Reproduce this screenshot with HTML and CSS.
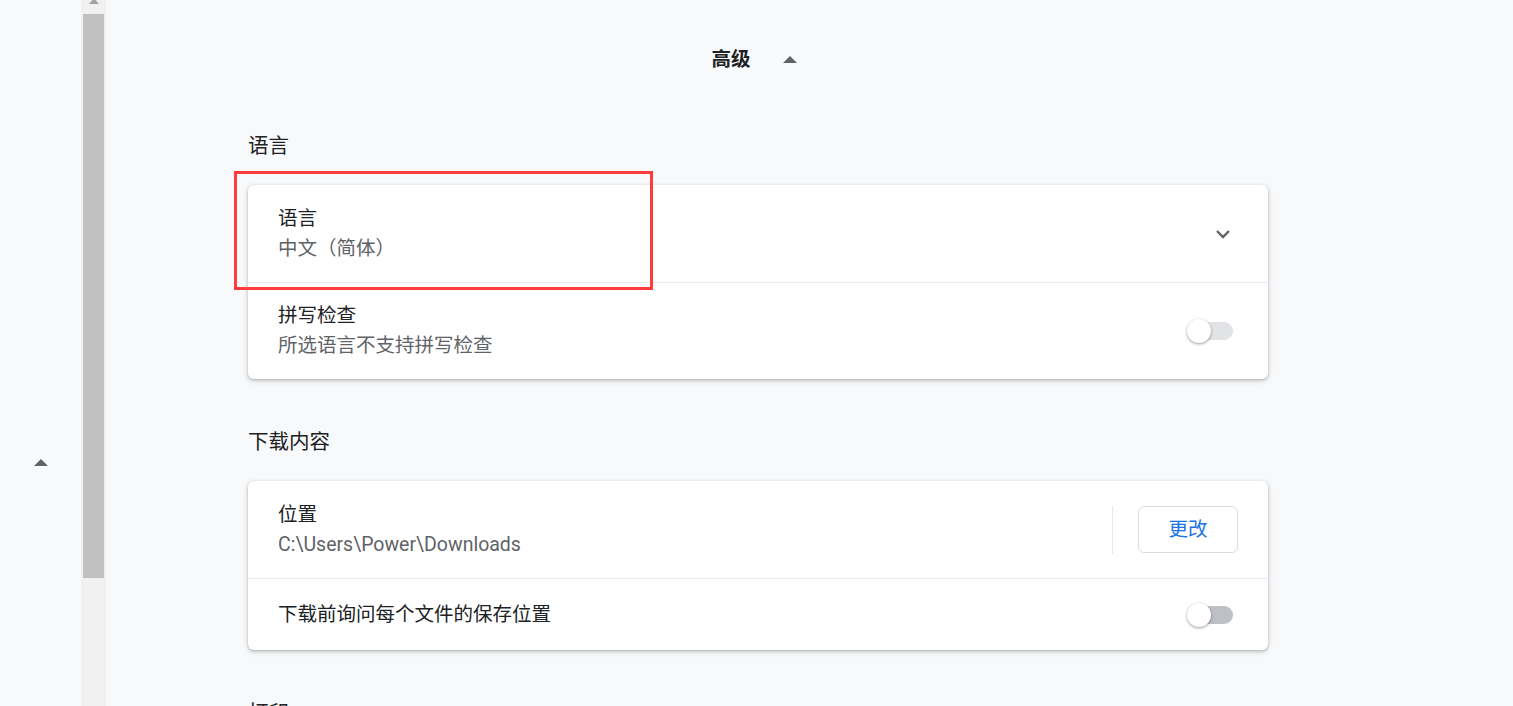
FILE: index.html
```html
<!DOCTYPE html>
<html lang="zh-CN">

<head>
    <meta charset="utf-8">
    <meta name="viewport" content="width=device-width, initial-scale=1">
    <link rel="stylesheet" href="styles.css">
</head>

<body>

    <!-- 왼쪽 접힌 메뉴 -->
    <div class="side">
        <span class="tri-up"></span>
    </div>

    <!-- 스크롤바 -->
    <div class="scrollbar">
        <span class="scroll-arrow"></span>
        <div class="scroll-thumb"></div>
    </div>

    <div class="main">
        <div class="advanced">
            <span class="advanced-label">高级</span>
            <span class="tri-up"></span>
        </div>

        <h2 class="section-title">语言</h2>
        <div class="card">
            <div class="row">
                <div class="row-text">
                    <div class="label">语言</div>
                    <div class="sub">中文（简体）</div>
                </div>
                <svg class="chevron" width="16" height="10" viewBox="0 0 16 10">
                    <polyline points="2,2 8,8 14,2" fill="none" stroke="#5f6368" stroke-width="2.4" />
                </svg>
            </div>
            <div class="row">
                <div class="row-text">
                    <div class="label">拼写检查</div>
                    <div class="sub">所选语言不支持拼写检查</div>
                </div>
                <div class="toggle">
                    <span class="track"></span>
                    <span class="knob"></span>
                </div>
            </div>
        </div>

        <h2 class="section-title">下载内容</h2>
        <div class="card">
            <div class="row">
                <div class="row-text">
                    <div class="label">位置</div>
                    <div class="sub latin">C:\Users\Power\Downloads</div>
                </div>
                <div class="separator"></div>
                <button class="btn">更改</button>
            </div>
            <div class="row short">
                <div class="row-text">
                    <div class="label">下载前询问每个文件的保存位置</div>
                </div>
                <div class="toggle dark">
                    <span class="track"></span>
                    <span class="knob"></span>
                </div>
            </div>
        </div>

        <h2 class="section-title">打印</h2>

        <!-- 빨간 강조 박스 -->
        <div class="highlight"></div>
    </div>

</body>

</html>
```

FILE: styles.css
```css
html, body {
    margin: 0;
    padding: 0;
    height: 706px;
    overflow: hidden;
}

body {
    display: flex;
    background: #f8f9fa;
    font-family: Roboto, "Noto Sans CJK SC", sans-serif;
    color: #202124;
}

/* 작은 위쪽 삼각형 */
.tri-up {
    display: block;
    width: 0;
    height: 0;
    border-left: 7px solid transparent;
    border-right: 7px solid transparent;
    border-bottom: 7px solid #5f6368;
}

.side {
    width: 81px;
    flex: none;
    display: flex;
    flex-direction: column;
    align-items: center;
    padding-top: 459px;
    box-sizing: border-box;
}

.scrollbar {
    width: 25px;
    flex: none;
    background: #f1f1f1;
    display: flex;
    flex-direction: column;
    align-items: center;
}

.scroll-arrow {
    width: 0;
    height: 0;
    margin-top: -2px;
    border-left: 5px solid transparent;
    border-right: 5px solid transparent;
    border-bottom: 6px solid #a3a3a3;
}

.scroll-thumb {
    width: 21px;
    height: 564px;
    margin-top: 10px;
    background: #c1c1c1;
}

.main {
    flex: 1;
    padding-left: 142px;
}

.advanced {
    width: 1020px;
    display: flex;
    align-items: center;
    justify-content: center;
    gap: 32px;
    padding-top: 45px;
    padding-right: 8px;
    box-sizing: border-box;
    height: 75px;
    margin-bottom: 56px;
}

.advanced-label {
    font-size: 19.5px;
    font-weight: bold;
    line-height: 30px;
}

.advanced .tri-up {
    margin-top: -1px;
}

.section-title {
    margin: 0 0 24px 0;
    font-size: 20.5px;
    font-weight: normal;
    line-height: 30px;
    color: #202124;
}

.card {
    width: 1020px;
    background: #fff;
    border-radius: 6px;
    box-shadow: 0 1px 3px 0 rgba(60, 64, 67, .3), 0 2px 5px 1px rgba(60, 64, 67, .12);
    margin-bottom: 48px;
}

.row {
    display: flex;
    align-items: center;
    min-height: 96px;
    padding: 0 30px;
    border-top: 1px solid #e8eaed;
}

.row:first-child {
    border-top: none;
    min-height: 97px;
}

.row.short {
    min-height: 71px;
}

.row-text {
    flex: 1;
}

.label {
    font-size: 19.5px;
    line-height: 30px;
    color: #202124;
}

.sub {
    font-size: 19.5px;
    line-height: 30px;
    color: #5f6368;
}

.chevron {
    margin-right: 7px;
}

.separator {
    width: 1px;
    height: 48px;
    background: #e8eaed;
    margin-right: 25px;
}

.btn {
    width: 100px;
    height: 47px;
    border: 1.5px solid #dadce0;
    border-radius: 6px;
    background: #fff;
    color: #1a73e8;
    font-family: Roboto, "Noto Sans CJK SC", sans-serif;
    font-size: 19.5px;
    padding: 0 0 5px 0;
}

/* 토글 스위치: 트랙 위에 노브가 겹친다 */
.toggle {
    position: relative;
    width: 46px;
    height: 24px;
    margin-right: 5px;
}

.track {
    position: absolute;
    left: 7px;
    top: 3px;
    width: 39px;
    height: 18px;
    border-radius: 9px;
    background: #e1e3e6;
}

.toggle.dark .track {
    background: #bdc1c6;
}

.knob {
    position: absolute;
    left: 0;
    top: 0;
    width: 24px;
    height: 24px;
    border-radius: 50%;
    background: #fff;
    box-shadow: 0 1px 3px rgba(0, 0, 0, .4);
}

.highlight {
    position: absolute;
    left: 234px;
    top: 171px;
    width: 419px;
    height: 119px;
    box-sizing: border-box;
    border: 3px solid #ff3b3b;
}
```
